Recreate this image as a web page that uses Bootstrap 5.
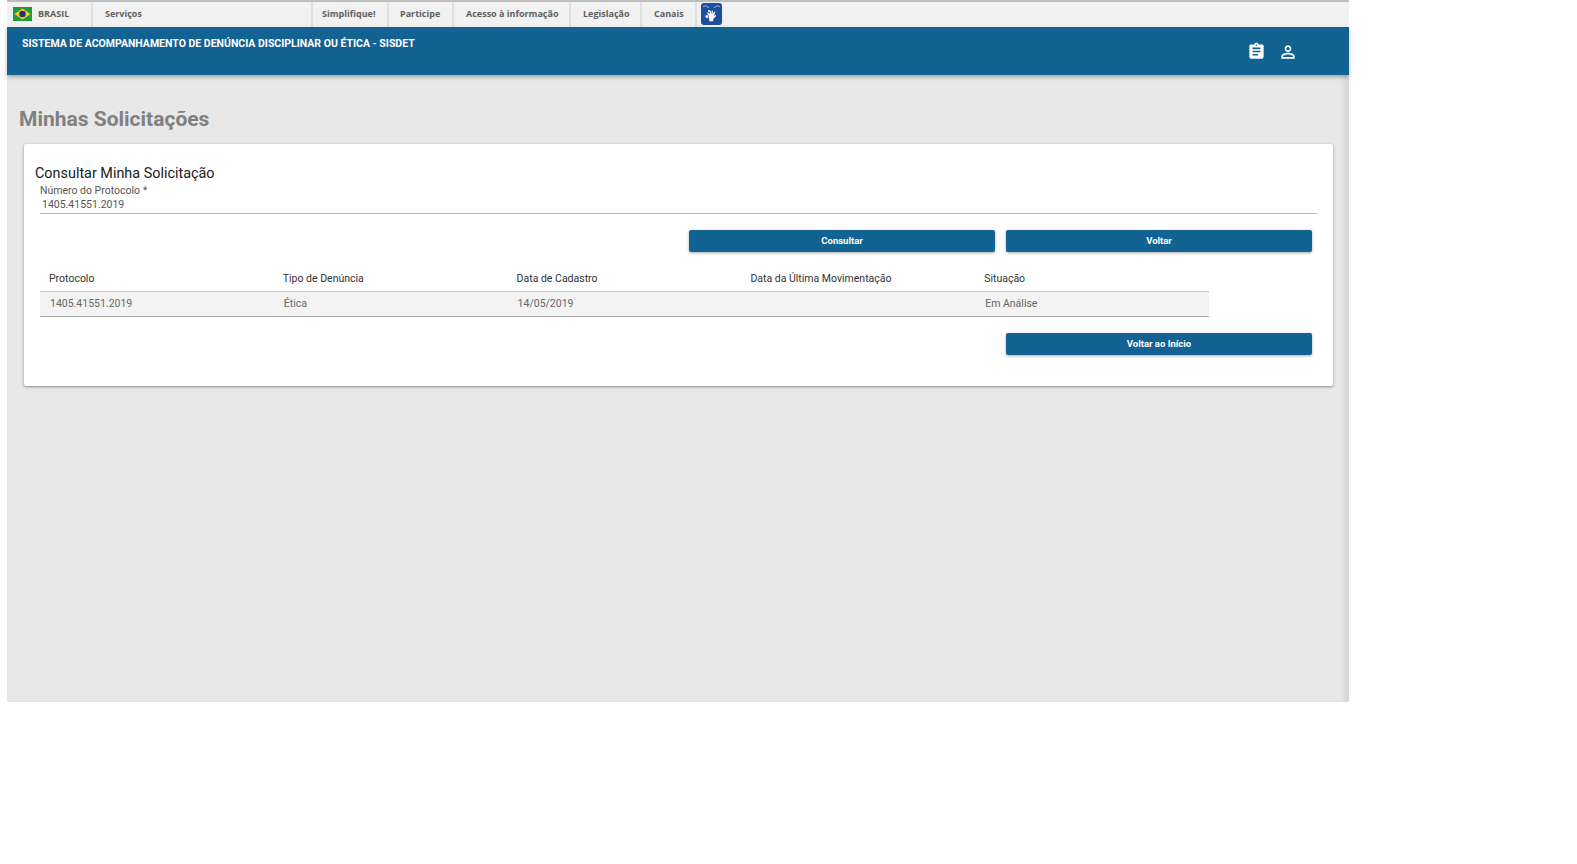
<!DOCTYPE html>
<html>
<head>
  <meta charset="UTF-8">
  <title>SISDET - Minhas Solicitações</title>
  <link href="https://cdn.jsdelivr.net/npm/bootstrap@5.3.0/dist/css/bootstrap.min.css" rel="stylesheet">
  <style>
    body {
      background: #fff;
      font-family: Roboto, "Liberation Sans", sans-serif;
    }
    .frame {
      width: 1342px;
      height: 702px;
      margin-left: 7px;
      background: #e8e8e8;
      box-shadow: inset -7px 0 6px -3px #d2d2d2;
    }
    /* barra do governo */
    .gov-bar {
      height: 27px;
      background: #f1f1f1;
      border-top: 2px solid #bdbdbd;
      font-family: "Open Sans", "Noto Sans", sans-serif;
      font-size: 9px;
      font-weight: 700;
      color: #606060;
    }
    .gov-item {
      height: 25px;
      line-height: 24px;
      border-right: 2px solid #e0e0e0;
    }
    .gov-brasil { width: 86px; padding: 0 0 1px 6px; }
    .gov-servicos { width: 220px; padding-left: 12px; }
    .gov-simp { width: 76px; padding-left: 9px; }
    .gov-part { width: 65px; padding-left: 11px; }
    .gov-acesso { width: 117px; padding-left: 12px; }
    .gov-leg { width: 71px; padding-left: 12px; }
    .gov-canais { width: 55px; padding-left: 12px; }
    .gov-flag { margin-right: 6px; }
    .gov-libras { margin: 1px 0 0 4px; display: block; }
    /* cabecalho azul */
    .sis-header {
      height: 48px;
      background: #126292;
      box-shadow: 0 2px 4px rgba(0, 0, 0, .3);
      color: #fff;
      padding: 10px 0 0 15px;
      position: relative;
    }
    .sis-title {
      font-size: 10.5px;
      font-weight: 700;
      line-height: 13px;
      flex-grow: 1;
    }
    .sis-icons { margin: 5px 51px 0 0; gap: 12px; }
    .page-title {
      font-size: 21px;
      font-weight: 700;
      color: #808080;
      margin: 0;
      padding: 31px 0 0 12px;
      line-height: 26px;
    }
    .panel {
      width: 1309px;
      height: 242px;
      margin: 12px 0 0 17px;
      border: 0;
      border-radius: 2px;
      box-shadow: 0 1px 3px rgba(0, 0, 0, .4);
      padding: 21px 16px 0 11px;
    }
    .panel-title {
      font-size: 14.4px;
      font-weight: 400;
      line-height: 18px;
      color: #212121;
      margin: 0;
    }
    .proto-field {
      margin: 0 0 0 5px;
      border-bottom: 1px solid #b5b5b5;
      font-size: 10.5px;
      line-height: 13px;
      color: #555;
      height: 31px;
      padding-top: 1px;
    }
    .proto-value { padding-left: 2px; color: #555; margin-top: 1px; }
    .act-row { gap: 11px; padding-right: 5px; margin-top: 16px; }
    .act-btn {
      width: 306px;
      height: 22px;
      padding: 0;
      border: 0;
      border-radius: 2px;
      background: #126292;
      color: #fff;
      font-size: 9.5px;
      font-weight: 700;
      box-shadow: 0 1px 3px rgba(0, 0, 0, .35);
    }
    .act-btn:hover { background: #126292; color: #fff; }
    .solic-table {
      width: 1169px;
      margin: 13px 0 0 5px;
      table-layout: fixed;
      font-size: 10.5px;
    }
    .solic-table th {
      font-weight: 400;
      color: #333;
      height: 26px;
      padding: 1px 0 0 9px;
      line-height: 25px;
      border-bottom: 1px solid #c6c6c6;
    }
    .solic-table td {
      background: #f3f3f3;
      color: #666;
      height: 25px;
      padding: 0 0 0 10px;
      vertical-align: middle;
      border-bottom: 1px solid #aaa;
    }
    .end-row { padding-right: 5px; margin-top: 16px; }
  </style>
</head>
<body>

  <div class="frame">
    <!-- Barra Brasil -->
    <div class="gov-bar d-flex">
      <div class="gov-item gov-brasil d-flex align-items-center">
        <svg class="gov-flag" width="19" height="14" viewBox="0 0 19 14">
          <rect width="19" height="14" fill="#1f9a3c"/>
          <polygon points="9.5,1.5 17.5,7 9.5,12.5 1.5,7" fill="#f6d21a"/>
          <circle cx="9.5" cy="7" r="3.3" fill="#27307e"/>
        </svg>
        <span>BRASIL</span>
      </div>
      <div class="gov-item gov-servicos">Serviços</div>
      <div class="gov-item gov-simp">Simplifique!</div>
      <div class="gov-item gov-part">Participe</div>
      <div class="gov-item gov-acesso">Acesso à informação</div>
      <div class="gov-item gov-leg">Legislação</div>
      <div class="gov-item gov-canais">Canais</div>
      <svg class="gov-libras" width="21" height="22" viewBox="0 0 21 22">
        <rect width="21" height="22" rx="3" fill="#1f4e9c"/>
        <path d="M2 4c2-2 4-1 6 1M19 4c-2-2-4-1-6 1" fill="none" stroke="#cfdcf2" stroke-width=".8"/>
        <path d="M8 13l-2-3 1-.5 2 2-.5-3.500 1.100-.2.800 3.200.4-3.500 1.100.2-.2 3.500 1.500-2.600 1 .6-1.300 3.500 1.800-.9.600 1-2.800 3-.5 2.500h-3.500l-.5-3z" fill="#fff"/>
        <circle cx="6" cy="13.500" r="1.700" fill="#cfdcf2"/>
        <circle cx="8" cy="8" r="1.200" fill="#cfdcf2"/>
      </svg>
    </div>

    <!-- Cabecalho -->
    <div class="sis-header d-flex">
      <div class="sis-title">SISTEMA DE ACOMPANHAMENTO DE DENÚNCIA DISCIPLINAR OU ÉTICA - SISDET</div>
      <div class="sis-icons d-flex align-items-start">
        <svg width="19" height="19" viewBox="0 0 24 24" fill="#fff"><path d="M19 3h-4.180C14.400 1.840 13.300 1 12 1c-1.300 0-2.400.84-2.820 2H5c-1.100 0-2 .9-2 2v14c0 1.100.9 2 2 2h14c1.100 0 2-.9 2-2V5c0-1.100-.9-2-2-2zm-7 0c.55 0 1 .45 1 1s-.45 1-1 1-1-.45-1-1 .45-1 1-1zm2 14H7v-2h7v2zm3-4H7v-2h10v2zm0-4H7V7h10v2z"/></svg>
        <svg width="20" height="20" viewBox="0 0 24 24" fill="#fff"><path d="M12 5.900c1.160 0 2.100.94 2.100 2.100s-.94 2.100-2.100 2.100S9.900 9.160 9.900 8s.94-2.100 2.100-2.100m0 9c2.970 0 6.100 1.460 6.100 2.100v1.100H5.900V17c0-.64 3.130-2.100 6.100-2.100M12 4C9.790 4 8 5.790 8 8s1.790 4 4 4 4-1.790 4-4-1.790-4-4-4zm0 9c-2.670 0-8 1.340-8 4v3h16v-3c0-2.660-5.330-4-8-4z"/></svg>
      </div>
    </div>

    <h1 class="page-title">Minhas Solicitações</h1>

    <div class="card panel">
      <h2 class="panel-title">Consultar Minha Solicitação</h2>
      <div class="proto-field">
        <div>Número do Protocolo *</div>
        <div class="proto-value">1405.41551.2019</div>
      </div>

      <div class="act-row d-flex justify-content-end">
        <button class="btn act-btn" type="button">Consultar</button>
        <button class="btn act-btn" type="button">Voltar</button>
      </div>

      <table class="solic-table">
        <thead>
          <tr>
            <th>Protocolo</th>
            <th>Tipo de Denúncia</th>
            <th>Data de Cadastro</th>
            <th>Data da Última Movimentação</th>
            <th>Situação</th>
          </tr>
        </thead>
        <tbody>
          <tr>
            <td>1405.41551.2019</td>
            <td>Ética</td>
            <td>14/05/2019</td>
            <td></td>
            <td>Em Análise</td>
          </tr>
        </tbody>
      </table>

      <div class="end-row d-flex justify-content-end">
        <button class="btn act-btn" type="button">Voltar ao Início</button>
      </div>
    </div>
  </div>

  <script src="https://cdn.jsdelivr.net/npm/bootstrap@5.3.0/dist/js/bootstrap.bundle.min.js"></script>
</body>
</html>
